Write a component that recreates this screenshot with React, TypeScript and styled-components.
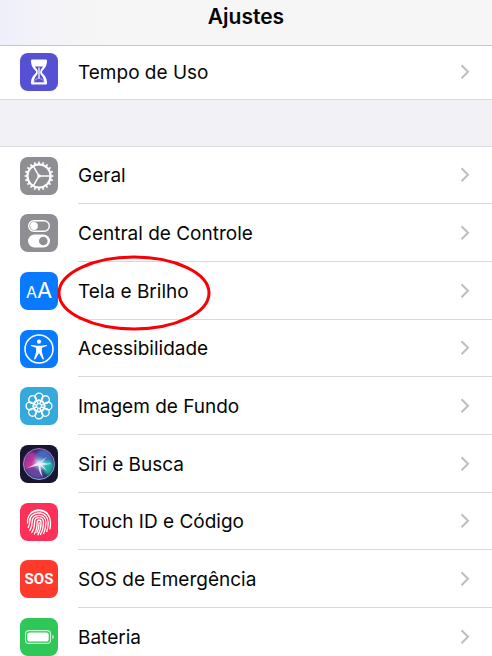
import React from 'react';
import styled, { createGlobalStyle } from 'styled-components';

const GlobalStyle = createGlobalStyle`
  *, *::before, *::after { box-sizing: border-box; }
  html, body { margin: 0; background: #fff; }
  body { font-family: Inter, "Liberation Sans", sans-serif; color: #060606; }
`;

const Page = styled.main`
  width: 100%;
  height: 100vh;
  overflow: hidden;
  background: #fff;
`;

const Header = styled.header`
  display: flex;
  justify-content: center;
  height: 46px;
  padding-top: 4px;
  border-bottom: 1px solid #c6c6c8;
  background: linear-gradient(90deg, #efeffb 0, #f3f3f8 50px, #f6f6f6 100px);
`;

const Title = styled.h1`
  margin: 0;
  font-size: 21px;
  line-height: 25px;
  font-weight: 600;
  color: #050505;
`;

const Gap = styled.div`
  height: 46px;
  background: #f1f1f6;
`;

const List = styled.ul<{ $ruled?: boolean }>`
  list-style: none;
  margin: 0;
  padding: 0;
  border-top: ${p => (p.$ruled ? '1px solid #dcdcde' : '0')};
`;

const Item = styled.li<{ $compact?: boolean }>`
  height: ${p => (p.$compact ? 54 : 58)}px;
  padding-bottom: ${p => (p.$compact ? 1 : 0)}px;
  border-bottom: ${p => (p.$compact ? '1px solid #d9d9db' : '0')};
  &:nth-child(3n + 1) { height: ${p => (p.$compact ? 54 : 57)}px; }
`;

const RowLink = styled.a`
  display: flex;
  height: 100%;
  padding-left: 20px;
  color: inherit;
  text-decoration: none;
`;

const IconCell = styled.span`
  display: flex;
  align-items: center;
  width: 58px;
  flex: none;
`;

const Body = styled.span<{ $line: boolean }>`
  flex: 1;
  display: flex;
  align-items: center;
  justify-content: space-between;
  padding-right: 22px;
  border-bottom: ${p => (p.$line ? '1px solid #d9d9db' : '0')};
`;

const Label = styled.span`
  position: relative;
  padding-top: 2px;
  font-size: 19px;
  line-height: 24px;
`;

const Ring = styled.svg`
  position: absolute;
  left: -22px;
  top: -24px;
  width: 156px;
  height: 78px;
  pointer-events: none;
  overflow: visible;
  z-index: 1;
`;

const Tile = styled.span<{ $bg: string }>`
  display: flex;
  align-items: center;
  justify-content: center;
  width: 38px;
  height: 38px;
  border-radius: 8px;
  overflow: hidden;
  color: #fff;
  background: ${p => p.$bg};
`;

const Letters = styled.span`
  display: flex;
  align-items: baseline;
  line-height: 24px;
`;

const Letter = styled.span<{ $size: number }>`
  font-size: ${p => p.$size}px;
`;

const Sos = styled.span`
  font-family: "Liberation Sans Narrow", Roboto, sans-serif;
  font-size: 15px;
  font-weight: 700;
  line-height: 20px;
`;

const Art = ({ children }: { children: React.ReactNode }) => (
  <svg width="38" height="38" viewBox="0 0 38 38" fill="none" stroke="#fff" aria-hidden="true">
    {children}
  </svg>
);

const Hourglass = () => (
  <Art>
    <path
      d="M12.200 6.500h13.600q1.200 0 1.200 1.300c0 5-2.200 7.700-4.400 9.700-.9.9-.9 2.200 0 3.100 2.200 2 4.400 4.700 4.400 9.600q0 1.300-1.200 1.300H12.200q-1.200 0-1.200-1.300c0-4.900 2.200-7.600 4.400-9.600.9-.9.9-2.200 0-3.100C13.200 15.500 11 12.800 11 7.800q0-1.300 1.200-1.300z"
      fill="#fff"
      stroke="none"
    />
    <path d="M15 13.500h8c-.7 1.300-1.300 2-2.100 3-.9 1.200-.9 4.200 0 5.200 1.400 1.500 2.900 3.300 3.400 7.300H13.700c.5-4 2-5.800 3.400-7.300.9-1 .9-4 0-5.200-.8-1-1.400-1.700-2.100-3z" fill="#5650d5" stroke="none" />
    <path d="M19 14.500v12" stroke="#fff" strokeWidth="1.300" />
    <path d="M13.500 29.500c1-2.500 3.200-3.800 5.500-4.300 2.300.5 4.500 1.800 5.500 4.300z" fill="#5650d5" stroke="#e9e8ff" strokeWidth=".6" />
  </Art>
);

const Gear = () => (
  <Art>
    <circle cx="19" cy="19" r="11.500" strokeWidth="2.100" />
    {Array.from({ length: 20 }, (_, i) => (
      <path key={i} d="M18.100 7.200l.35-2.400h1.100l.35 2.400z" fill="#fff" strokeWidth=".5" transform={`rotate(${i * 18} 19 19)`} />
    ))}
    <path d="M19 19h11M19 19l-5.600-9.700M19 19l-5.600 9.700" strokeWidth="1.500" />
    <circle cx="19" cy="19" r="1.800" fill="#fff" stroke="none" />
  </Art>
);

const Toggles = () => (
  <Art>
    <rect x="8.700" y="6.700" width="20.600" height="10.600" rx="5.300" strokeWidth="1.400" />
    <circle cx="14" cy="12" r="3.900" fill="#fff" stroke="none" />
    <rect x="8" y="20.500" width="22" height="13" rx="6.500" fill="#fff" stroke="none" />
    <circle cx="23.300" cy="27" r="4.300" fill="#8e8e93" stroke="none" />
  </Art>
);

const Person = () => (
  <Art>
    <circle cx="19" cy="19" r="14" strokeWidth="1.500" />
    <circle cx="19" cy="11.700" r="2.100" fill="#fff" stroke="none" />
    <path
      d="M11.500 15l5.500.7h4l5.500-.7q1.100 0 .4 1.100l-5 1.700v4.200l2 6.800q-.2 1.300-1.300.5L19 23l-3.600 6.300q-1.100.8-1.300-.5l2-6.800v-4.200l-5-1.700q-.7-1.100.4-1.100z"
      fill="#fff"
      stroke="none"
    />
  </Art>
);

const Flower = () => (
  <Art>
    {[0, 45, 90, 135, 180, 225, 270, 315].map(a => (
      <g key={a} transform={`rotate(${a} 19 19)`}>
        <circle cx="19" cy="10" r="3.900" strokeWidth="1.400" />
        <circle cx="19" cy="14.600" r="1.900" strokeWidth="1" />
      </g>
    ))}
    <circle cx="19" cy="19" r="2.300" fill="#35a9dc" strokeWidth="1" />
  </Art>
);

const Siri = () => (
  <Art>
    <defs>
      <radialGradient id="siri-core">
        <stop offset="0" stopColor="#fff" />
        <stop offset=".3" stopColor="#d8fbff" stopOpacity=".7" />
        <stop offset="1" stopColor="#60bff0" stopOpacity="0" />
      </radialGradient>
      <linearGradient id="siri-pink" x1="0" y1="0" x2="1" y2="1">
        <stop stopColor="#61389b" />
        <stop offset=".55" stopColor="#cf3197" />
        <stop offset="1" stopColor="#ff6fa7" />
      </linearGradient>
      <linearGradient id="siri-teal" x1="0" y1="0" x2="1" y2="1">
        <stop stopColor="#44dcd5" />
        <stop offset="1" stopColor="#079184" />
      </linearGradient>
      <linearGradient id="siri-rim" x1="0" y1="0" x2="0" y2="1">
        <stop stopColor="#b263b5" />
        <stop offset="1" stopColor="#79b6cf" />
      </linearGradient>
      <filter id="siri-soft" x="-30%" y="-30%" width="160%" height="160%">
        <feGaussianBlur stdDeviation="1" />
      </filter>
    </defs>
    <circle cx="19" cy="19" r="15.500" fill="#393078" stroke="none" />
    <g stroke="none" filter="url(#siri-soft)">
      <path d="M19 19C19 11 13 4 8 8c-5 5-5 11-3 16 5 0 9-3 14-5z" fill="url(#siri-pink)" />
      <path d="M19 19C12 10 18 4 25 5c4 2 7 6 8 11-5-1-9 1-14 3z" fill="#4668b8" />
      <path d="M19 19c6-4 12-4 14-1 1 6-2 11-6 12-3-3-5-7-8-11z" fill="url(#siri-teal)" />
      <path d="M19 19c3 5 5 9 2 14-6 1-12-2-15-8 5-1 9-3 13-6z" fill="#6844a1" />
    </g>
    <circle cx="19.500" cy="18.500" r="8" fill="url(#siri-core)" stroke="none" />
    <path d="M5.500 23.500c5-1 8-4.500 13-6 4 0 8 1.500 13 1-4 1.300-7 1.500-9.500 1.300l5 6.200c-3-2-5-4-6.500-5.500.1 4 .8 7.500 2.300 11.500-3-3.500-4.300-7-4.300-11.500-4 .5-8 1.500-13 3z" fill="#f6edff" stroke="none" opacity=".9" />
    <path d="M13 10c1.500 3 3.500 6 6.500 8 1.500-2 3.500-4 7.500-6-3 3-4.500 4.500-6.500 7-3.500-2-6-5-7.500-9z" fill="#e8dcff" stroke="none" opacity=".8" />
    <circle cx="19" cy="19" r="15.500" stroke="url(#siri-rim)" strokeWidth="1" />
  </Art>
);

const Fingerprint = () => (
  <Art>
    <g strokeWidth="1.300" strokeLinecap="round">
      <path d="M10.500 10.500c5-4.700 12-4.700 17 0" />
      <path d="M7.500 20c-.3-9 5-12.500 11.500-12.500S30.500 12 30.500 20c0 2 0 4-.6 6" />
      <path d="M8.200 24.500c1.200-2 1.400-3.500 1.400-5.500 0-6 4-9 9.400-9 5.700 0 9.200 4 9.200 9.500 0 3.500-.4 6-1.400 9" />
      <path d="M9.800 27.500c2-3 2.300-5.500 2.300-8.500 0-4.300 3-6.700 6.900-6.700 4.200 0 6.900 3 6.900 7.200 0 4.500-.8 8-2.300 11" />
      <path d="M11.800 29.500c2.300-3.500 2.800-6.500 2.800-10.500 0-2.800 1.900-4.400 4.400-4.400 2.800 0 4.500 2 4.500 4.900 0 4.600-1 8.500-3 12" />
      <path d="M14.300 31c2.200-3.500 2.900-7.500 2.900-11.800 0-1.400.7-2.200 1.900-2.200 1.300 0 2 .9 2 2.500 0 4.500-1 8.500-3.200 12.300" />
      <path d="M19.100 19.500c0 4-.6 7-2.100 10" />
    </g>
  </Art>
);

const Battery = () => (
  <Art>
    <rect x="5.500" y="12.600" width="25" height="12.800" rx="3.500" stroke="#c9f4d1" strokeWidth="1.100" />
    <rect x="7.300" y="14.400" width="21.400" height="9.200" rx="2" fill="#fff" stroke="none" />
    <path d="M32.300 16.800c2 .8 2 3.600 0 4.400z" fill="#d7f7dd" stroke="none" />
  </Art>
);

const Chevron = () => (
  <svg width="10" height="16" viewBox="0 0 10 16" fill="none" stroke="#bebec1" strokeWidth="2" aria-hidden="true">
    <path d="M1.500 1.300L8 7.800l-6.500 6.500" />
  </svg>
);

interface Setting {
  label: string;
  bg: string;
  icon: React.ReactNode;
  circled?: boolean;
}

const usage: Setting = { label: 'Tempo de Uso', bg: '#5650d5', icon: <Hourglass /> };

const settings: Setting[] = [
  { label: 'Geral', bg: '#8e8e93', icon: <Gear /> },
  { label: 'Central de Controle', bg: '#8e8e93', icon: <Toggles /> },
  {
    label: 'Tela e Brilho',
    bg: '#087aff',
    icon: <Letters aria-hidden="true"><Letter $size={16}>A</Letter><Letter $size={22}>A</Letter></Letters>,
    circled: true,
  },
  { label: 'Acessibilidade', bg: '#087aff', icon: <Person /> },
  { label: 'Imagem de Fundo', bg: '#35a9dc', icon: <Flower /> },
  { label: 'Siri e Busca', bg: '#17152f', icon: <Siri /> },
  { label: 'Touch ID e Código', bg: '#fc3158', icon: <Fingerprint /> },
  { label: 'SOS de Emergência', bg: '#ff3a2c', icon: <Sos aria-hidden="true">SOS</Sos> },
  { label: 'Bateria', bg: '#30c759', icon: <Battery /> },
];

const Row = ({ setting, compact }: { setting: Setting; compact?: boolean }) => (
  <Item $compact={compact}>
    <RowLink href="#">
      <IconCell><Tile $bg={setting.bg}>{setting.icon}</Tile></IconCell>
      <Body $line={!compact}>
        <Label>
          {setting.label}
          {setting.circled && (
            <Ring viewBox="0 0 156 78" fill="none" aria-hidden="true">
              <ellipse cx="78" cy="39" rx="75" ry="36" stroke="#f80006" strokeWidth="3" />
            </Ring>
          )}
        </Label>
        <Chevron />
      </Body>
    </RowLink>
  </Item>
);

export default function App() {
  return (
    <>
      <GlobalStyle />
      <Page>
        <Header><Title>Ajustes</Title></Header>
        <List><Row setting={usage} compact /></List>
        <Gap />
        <List $ruled>
          {settings.map(s => <Row key={s.label} setting={s} />)}
        </List>
      </Page>
    </>
  );
}
